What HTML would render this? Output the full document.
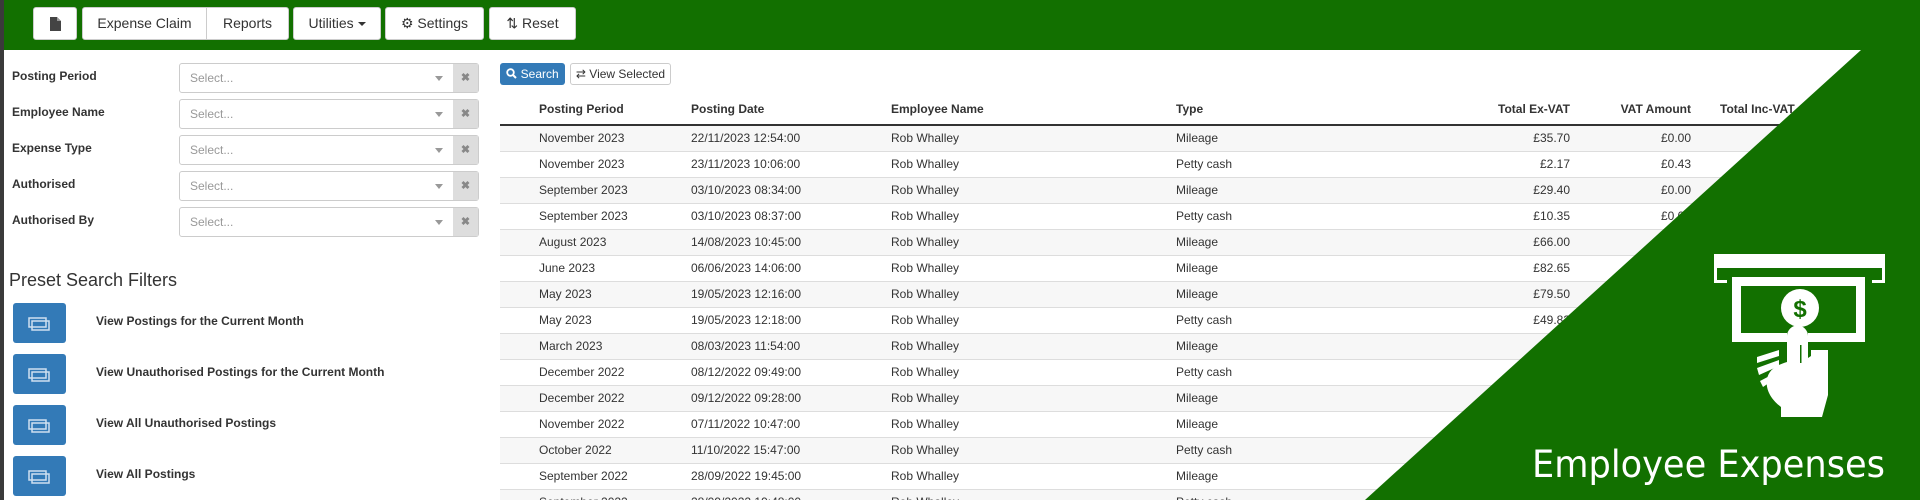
<!DOCTYPE html>
<html><head><meta charset="utf-8"><style>
*{box-sizing:border-box;margin:0;padding:0}
html{width:1920px;height:500px;overflow:hidden}
body{width:1920px;height:500px;overflow:hidden;background:#fff;font-family:"Liberation Sans",Arial,sans-serif;color:#333;position:relative}
.hdr{position:absolute;left:0;top:0;width:1920px;height:50px;background:#127000}
.lb{position:absolute;left:0;top:0;width:4px;height:500px;background:#3a3a3a;z-index:5}
.btn{position:absolute;top:7px;height:33px;background:#fff;border:1px solid #ccc;border-radius:3px;font-size:14px;line-height:31px;text-align:center;color:#333}
.lab{position:absolute;left:12px;font-size:12px;font-weight:bold}
.sel{position:absolute;left:179px;width:300px;height:30px;border:1px solid #ccc;border-radius:3px;background:#fff}
.sel span{position:absolute;left:10px;top:7px;font-size:12px;color:#999}
.sel i{position:absolute;left:255px;top:12px;border:4px solid transparent;border-top:5px solid #999}
.sel b{position:absolute;right:0;top:0;width:25px;height:28px;background:#ddd;color:#888;font-size:11px;text-align:center;line-height:28px}
.pb{position:absolute;left:13px;width:53px;height:40px;background:#337ab7;border-radius:3px}
.pt{position:absolute;left:96px;font-size:12px;font-weight:bold}
.tw{position:absolute;left:500px;top:94px;width:1420px;height:406px;overflow:hidden}
table{width:1420px;border-collapse:collapse;font-size:12px}
th{height:31px;text-align:left;border-bottom:2px solid #333;font-weight:bold;padding:0}
td{height:26px;border-top:1px solid #ddd;padding:0}
tbody tr:nth-child(odd){background:#f7f7f7}
.r{text-align:right}
</style></head><body>
<div class="hdr"></div><div class="lb"></div>
<div class="btn" style="left:33px;width:44px"><svg width="11" height="14" viewBox="0 0 11 14" style="margin-top:9px"><path d="M0 0H7L11 4V14H0Z" fill="#444"/><path d="M7 0V4H11" fill="#999"/></svg></div>
<div class="btn" style="left:82px;width:125px;border-radius:3px 0 0 3px">Expense Claim</div>
<div class="btn" style="left:206px;width:83px;border-radius:0 3px 3px 0">Reports</div>
<div class="btn" style="left:293px;width:88px">Utilities <span style="display:inline-block;border:4px solid transparent;border-top:4px solid #333;vertical-align:-2px"></span></div>
<div class="btn" style="left:385px;width:99px">⚙ Settings</div>
<div class="btn" style="left:489px;width:87px">⇅ Reset</div>

<div class="lab" style="top:69px">Posting Period</div>
<div class="lab" style="top:105px">Employee Name</div>
<div class="lab" style="top:141px">Expense Type</div>
<div class="lab" style="top:177px">Authorised</div>
<div class="lab" style="top:213px">Authorised By</div>
<div class="sel" style="top:63px"><span>Select...</span><i></i><b>✖</b></div>
<div class="sel" style="top:99px"><span>Select...</span><i></i><b>✖</b></div>
<div class="sel" style="top:135px"><span>Select...</span><i></i><b>✖</b></div>
<div class="sel" style="top:171px"><span>Select...</span><i></i><b>✖</b></div>
<div class="sel" style="top:207px"><span>Select...</span><i></i><b>✖</b></div>

<div style="position:absolute;left:9px;top:270px;font-size:18px">Preset Search Filters</div>
<div class="pb" style="top:303px"></div><div class="pt" style="top:314px">View Postings for the Current Month</div>
<div class="pb" style="top:354px"></div><div class="pt" style="top:365px">View Unauthorised Postings for the Current Month</div>
<div class="pb" style="top:405px"></div><div class="pt" style="top:416px">View All Unauthorised Postings</div>
<div class="pb" style="top:456px"></div><div class="pt" style="top:467px">View All Postings</div>
<svg style="position:absolute;left:0;top:0" width="70" height="500">
<g fill="none" stroke="#cfe0f0" stroke-width="1.5">
<rect x="29" y="318" width="17" height="9"/><rect x="32" y="321" width="17" height="9"/>
<rect x="29" y="369" width="17" height="9"/><rect x="32" y="372" width="17" height="9"/>
<rect x="29" y="420" width="17" height="9"/><rect x="32" y="423" width="17" height="9"/>
<rect x="29" y="471" width="17" height="9"/><rect x="32" y="474" width="17" height="9"/></g></svg>

<div style="position:absolute;left:500px;top:63px;width:65px;height:22px;background:#337ab7;border-radius:3px;color:#fff;font-size:12px;line-height:22px;text-align:center"><svg width="11" height="11" viewBox="0 0 11 11" style="vertical-align:-1px"><circle cx="4.5" cy="4.5" r="3.3" fill="none" stroke="#fff" stroke-width="1.8"/><path d="M7 7l3 3" stroke="#fff" stroke-width="2"/></svg> Search</div>
<div style="position:absolute;left:570px;top:63px;width:101px;height:22px;border:1px solid #ccc;border-radius:3px;font-size:12px;line-height:20px;text-align:center">⇄ View Selected</div>

<div class="tw"><table>
<colgroup><col style="width:39px"><col style="width:152px"><col style="width:200px"><col style="width:285px"><col style="width:170px"><col style="width:224px"><col style="width:121px"><col></colgroup>
<thead><tr><th></th><th>Posting Period</th><th>Posting Date</th><th>Employee Name</th><th>Type</th><th class="r">Total Ex-VAT</th><th class="r">VAT Amount</th><th style="padding-left:29px">Total Inc-VAT</th></tr></thead>
<tbody>
<tr><td></td><td>November 2023</td><td>22/11/2023 12:54:00</td><td>Rob Whalley</td><td>Mileage</td><td class="r">£35.70</td><td class="r">£0.00</td><td></td></tr>
<tr><td></td><td>November 2023</td><td>23/11/2023 10:06:00</td><td>Rob Whalley</td><td>Petty cash</td><td class="r">£2.17</td><td class="r">£0.43</td><td></td></tr>
<tr><td></td><td>September 2023</td><td>03/10/2023 08:34:00</td><td>Rob Whalley</td><td>Mileage</td><td class="r">£29.40</td><td class="r">£0.00</td><td></td></tr>
<tr><td></td><td>September 2023</td><td>03/10/2023 08:37:00</td><td>Rob Whalley</td><td>Petty cash</td><td class="r">£10.35</td><td class="r">£0.00</td><td></td></tr>
<tr><td></td><td>August 2023</td><td>14/08/2023 10:45:00</td><td>Rob Whalley</td><td>Mileage</td><td class="r">£66.00</td><td class="r">£0.00</td><td></td></tr>
<tr><td></td><td>June 2023</td><td>06/06/2023 14:06:00</td><td>Rob Whalley</td><td>Mileage</td><td class="r">£82.65</td><td class="r">£0.00</td><td></td></tr>
<tr><td></td><td>May 2023</td><td>19/05/2023 12:16:00</td><td>Rob Whalley</td><td>Mileage</td><td class="r">£79.50</td><td class="r">£0.00</td><td></td></tr>
<tr><td></td><td>May 2023</td><td>19/05/2023 12:18:00</td><td>Rob Whalley</td><td>Petty cash</td><td class="r">£49.83</td><td class="r">£0.00</td><td></td></tr>
<tr><td></td><td>March 2023</td><td>08/03/2023 11:54:00</td><td>Rob Whalley</td><td>Mileage</td><td class="r">£0.00</td><td class="r">£0.00</td><td></td></tr>
<tr><td></td><td>December 2022</td><td>08/12/2022 09:49:00</td><td>Rob Whalley</td><td>Petty cash</td><td class="r"></td><td class="r"></td><td></td></tr>
<tr><td></td><td>December 2022</td><td>09/12/2022 09:28:00</td><td>Rob Whalley</td><td>Mileage</td><td class="r"></td><td class="r"></td><td></td></tr>
<tr><td></td><td>November 2022</td><td>07/11/2022 10:47:00</td><td>Rob Whalley</td><td>Mileage</td><td></td><td></td><td></td></tr>
<tr><td></td><td>October 2022</td><td>11/10/2022 15:47:00</td><td>Rob Whalley</td><td>Petty cash</td><td></td><td></td><td></td></tr>
<tr><td></td><td>September 2022</td><td>28/09/2022 19:45:00</td><td>Rob Whalley</td><td>Mileage</td><td></td><td></td><td></td></tr>
<tr><td></td><td>September 2022</td><td>28/09/2022 19:48:00</td><td>Rob Whalley</td><td>Petty cash</td><td></td><td></td><td></td></tr>
</tbody></table></div>

<svg style="position:absolute;left:0;top:0;z-index:10" width="1920" height="500">
<polygon points="1861,50 1920,50 1920,500 1365,500" fill="#127000"/>
<g fill="#fff">
<rect x="1714" y="254" width="171" height="14"/>
<path d="M1714 268h3v12h10v3h-13z M1885 268h-3v12h-10v3h13z"/>
<path fill-rule="evenodd" d="M1732 277h133v65h-133z M1741 286v47h115v-47z"/>
<circle cx="1800" cy="308" r="19"/>
<rect x="1787" y="330" width="21" height="14" fill="#127000"/>
<path d="M1787 336a10.5 10.5 0 0 1 21 0v22l3 -2v-6h17v45l-6 22h-41l0 -10c-8 -6 -16 -16 -14 -28 2 -10 10 -14 20 -17z"/>
<path d="M1757 357l22 -7v6l-22 7z M1757 368l22 -8v6l-20 9z M1760 381l19 -10v5l-16 11z"/>
</g>
<rect x="1800" y="345" width="1.5" height="18" fill="#127000"/>
<text x="1800" y="317" text-anchor="middle" font-family="Liberation Sans,sans-serif" font-weight="bold" font-size="24" fill="#127000">$</text>
<text x="1532" y="477" font-family="DejaVu Sans,sans-serif" font-size="37" fill="#fff" textLength="353" lengthAdjust="spacingAndGlyphs">Employee Expenses</text>
</svg>
</body></html>
